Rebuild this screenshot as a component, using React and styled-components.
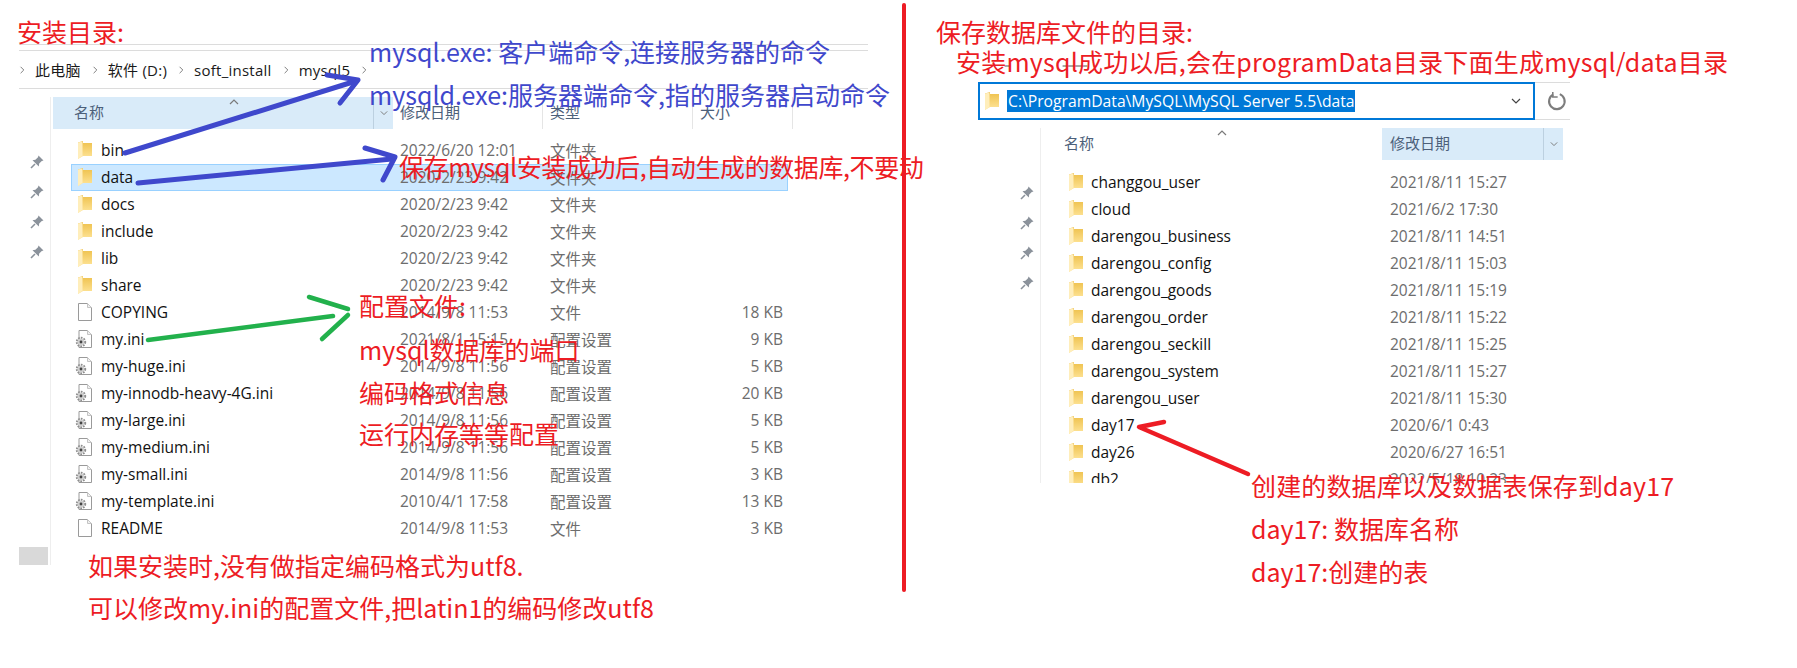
import React from 'react';
import styled, { createGlobalStyle } from 'styled-components';

const GlobalStyle = createGlobalStyle`
html, body {
    margin: 0;
    padding: 0;
    background: #fff;
}
body {
    font-family: "Open Sans", "Noto Sans CJK SC", sans-serif;
}
`

const Page = styled.div`
position: relative;
display: flex;
width: 1797px;
height: 668px;
overflow: hidden;
background: #fff;
`
const LeftPane = styled.section`
width: 902px;
flex: none;
padding: 44px 0 0 19px;
box-sizing: border-box;
`
const Divider = styled.div`
width: 4px;
height: 589px;
flex: none;
margin-top: 3px;
border-radius: 2px;
background: #ed1c24;
position: relative;
z-index: 1;
`
const RightPane = styled.section`
flex: 1;
padding: 82px 0 0 72px;
box-sizing: border-box;
`
const DoubleRule = styled.div`
width: 849px;
height: 5px;
border-top: 1px solid #dcdcdc;
border-bottom: 1px solid #dcdcdc;
`
const Breadcrumb = styled.nav`
display: flex;
align-items: center;
gap: 8px;
width: 849px;
height: 37px;
border-bottom: 1px solid #dcdcdc;
font-size: 15px;
letter-spacing: 0.25px;
color: #1a1a1a;
`
const Crumb = styled.span`
margin-right: 3px;
white-space: nowrap;
`
const AddressRow = styled.div`
display: flex;
width: 592px;
height: 38px;
box-sizing: border-box;
border-top: 1px solid #dcdcdc;
border-bottom: 1px solid #dcdcdc;
`
const AddressBar = styled.div`
display: flex;
align-items: center;
width: 557px;
margin: -1px 0;
padding: 0 12px 0 5px;
box-sizing: border-box;
border: 2px solid #0078d7;
background: #fff;
`
const AddressText = styled.span`
margin-left: 8px;
padding: 0 1px;
flex: none;
width: 348px;
box-sizing: border-box;
background: #0078d7;
color: #fff;
font-size: 15.7px;
line-height: 22px;
white-space: nowrap;
overflow: hidden;
`
const AddressCaret = styled.span`
margin-left: auto;
display: flex;
`
const RefreshSlot = styled.div`
flex: 1;
display: flex;
align-items: center;
justify-content: center;
padding-left: 8px;
`
const Body = styled.div`
display: flex;
height: ${props => props.$height}px;
margin-top: ${props => props.$top}px;
margin-left: ${props => props.$left || 0}px;
overflow: hidden;
`
const PinRail = styled.aside`
position: relative;
flex: none;
display: flex;
flex-direction: column;
align-items: flex-end;
gap: 14px;
width: ${props => props.$width}px;
box-sizing: border-box;
padding: ${props => props.$pad}px 5px 0 0;
border-right: 1px solid #eeeeee;
`
const ScrollThumb = styled.div`
position: absolute;
left: 0;
bottom: 0;
width: 29px;
height: 18px;
background: #d9d9d9;
`
const ListArea = styled.div`
flex: 1;
padding-left: 2px;
min-width: 0;
`
const HeaderRow = styled.div`
position: relative;
display: flex;
height: 32px;
color: #4c607a;
font-size: 15px;
`
const HeaderCell = styled.div`
display: flex;
align-items: center;
flex: none;
width: ${props => props.$width}px;
box-sizing: border-box;
padding: 0 0 3px ${props => props.$pad}px;
background: ${props => (props.$active ? '#d9ebf9' : 'transparent')};
border-right: 1px solid ${props => (props.$active ? '#d9ebf9' : props.$plain ? 'transparent' : '#e5e5e5')};
`
const HeaderDrop = styled.div`
display: flex;
align-items: center;
justify-content: center;
flex: none;
width: ${props => props.$width}px;
background: ${props => (props.$active ? '#d9ebf9' : 'transparent')};
border-left: 1px solid ${props => (props.$active ? '#bcd0e0' : '#e5e5e5')};
`
const SortMark = styled.span`
position: absolute;
top: 0;
left: ${props => props.$left}px;
display: flex;
`
const Rows = styled.ul`
list-style: none;
margin: ${props => props.$top}px 0 0 ${props => props.$left}px;
padding: 0;
`
const Row = styled.li`
display: grid;
grid-template-columns: ${props => props.$cols};
align-items: center;
width: ${props => props.$width}px;
height: 27px;
box-sizing: border-box;
font-size: 15.5px;
white-space: nowrap;
background: ${props => (props.$selected ? '#cce8ff' : 'transparent')};
outline: ${props => (props.$selected ? '1px solid #99d1ff' : 'none')};
outline-offset: -1px;
`
const NameCell = styled.span`
display: flex;
align-items: center;
gap: ${props => props.$gap}px;
padding-left: 7px;
color: #111;
`
const MutedCell = styled.span`
color: #6d6d6d;
`
const SizeCell = styled.span`
color: #6d6d6d;
text-align: right;
padding-right: 5px;
`
const ArrowLayer = styled.svg`
position: absolute;
top: 0;
left: 0;
z-index: 2;
pointer-events: none;
`
const Note = styled.div`
position: absolute;
z-index: 3;
left: ${props => props.$x}px;
top: ${props => props.$y - 17}px;
color: ${props => (props.$blue ? '#3f48cc' : '#ed1c24')};
font-family: "Noto Sans CJK SC", sans-serif;
font-size: 25px;
line-height: 34px;
letter-spacing: ${props => props.$track || 0}px;
white-space: nowrap;
`

const FolderIcon = () => (
    <svg width="14" height="18" viewBox="0 0 14 18" style={{ flex: 'none' }}>
        <defs>
            <linearGradient id="folderFill" x1="0" y1="0" x2="0" y2="1">
                <stop offset="0" stopColor="#eec04a" />
                <stop offset="1" stopColor="#ffe69c" />
            </linearGradient>
        </defs>
        <path d="M0 1.5 L5 0 L5 2 L14 2 L14 15 L5 15 L0 18 Z" fill="url(#folderFill)" />
        <path d="M0 1.5 L4.5 .5 L4.5 15 L0 18 Z" fill="#ffeebb" />
    </svg>
);

const DocIcon = () => (
    <svg width="14" height="18" viewBox="0 0 14 18" style={{ flex: 'none' }}>
        <path d="M.5 .5 H9.5 L13.5 4.5 V17.5 H.5 Z" fill="#fff" stroke="#9a9a9a" />
        <path d="M9.5 .5 V4.5 H13.5" fill="#f0f0f0" stroke="#c4c4c4" />
    </svg>
);

const IniIcon = () => (
    <svg width="18" height="20" viewBox="0 0 18 20" style={{ flex: 'none', marginLeft: '-3px', marginRight: '-1px' }}>
        <path d="M4 1.5 H12.5 L16.5 5.5 V18.5 H4 Z" fill="#fff" stroke="#9a9a9a" />
        <path d="M12.5 1.5 V5.5 H16.5" fill="#f0f0f0" stroke="#c4c4c4" />
        <circle cx="6" cy="13" r="4" fill="none" stroke="#8e8e8e" strokeWidth="2.4" strokeDasharray="1.6 1" />
        <circle cx="6" cy="13" r="3.4" fill="#cfcfcf" />
        <circle cx="6" cy="13" r="1.4" fill="#444" />
    </svg>
);

const PinIcon = () => (
    <svg width="16" height="16" viewBox="0 0 16 16">
        <path d="M9.5 1.5 L14.5 6.5 L12.8 7 L10.2 9.6 L9.8 12.5 L3.5 6.2 L6.4 5.8 L9 3.2 Z" fill="#8b929b" />
        <path d="M6 10 L2 14" stroke="#8b929b" strokeWidth="1.6" />
    </svg>
);

const Chevron = ({ dir = 'right', size = 8, color = '#7a7a7a' }) => {
    const paths = {
        right: 'M2 1 L6 5 L2 9',
        down: 'M1 3 L5 7 L9 3',
        up: 'M1 7 L5 3 L9 7',
    };
    return (
        <svg width={size} height={size} viewBox="0 0 10 10" fill="none" stroke={color} strokeWidth="1.2">
            <path d={paths[dir]} />
        </svg>
    );
};

const RefreshIcon = () => (
    <svg width="20" height="20" viewBox="0 0 18 18" fill="none" stroke="#7d7d7d" strokeWidth="1.9">
        <path d="M11.5 2.8 A7 7 0 1 1 5.6 3.1" />
        <path d="M5.2 .8 V5.4 H9.6" strokeWidth="1.4" />
    </svg>
);

const leftFiles = [
    { name: 'bin', icon: 'folder', date: '2022/6/20 12:01', type: '文件夹' },
    { name: 'data', icon: 'folder', date: '2020/2/23 9:42', type: '文件夹', selected: true },
    { name: 'docs', icon: 'folder', date: '2020/2/23 9:42', type: '文件夹' },
    { name: 'include', icon: 'folder', date: '2020/2/23 9:42', type: '文件夹' },
    { name: 'lib', icon: 'folder', date: '2020/2/23 9:42', type: '文件夹' },
    { name: 'share', icon: 'folder', date: '2020/2/23 9:42', type: '文件夹' },
    { name: 'COPYING', icon: 'doc', date: '2014/9/8 11:53', type: '文件', size: '18 KB' },
    { name: 'my.ini', icon: 'ini', date: '2021/8/1 15:15', type: '配置设置', size: '9 KB' },
    { name: 'my-huge.ini', icon: 'ini', date: '2014/9/8 11:56', type: '配置设置', size: '5 KB' },
    { name: 'my-innodb-heavy-4G.ini', icon: 'ini', date: '2014/9/8 11:56', type: '配置设置', size: '20 KB' },
    { name: 'my-large.ini', icon: 'ini', date: '2014/9/8 11:56', type: '配置设置', size: '5 KB' },
    { name: 'my-medium.ini', icon: 'ini', date: '2014/9/8 11:56', type: '配置设置', size: '5 KB' },
    { name: 'my-small.ini', icon: 'ini', date: '2014/9/8 11:56', type: '配置设置', size: '3 KB' },
    { name: 'my-template.ini', icon: 'ini', date: '2010/4/1 17:58', type: '配置设置', size: '13 KB' },
    { name: 'README', icon: 'doc', date: '2014/9/8 11:53', type: '文件', size: '3 KB' },
];

const rightFiles = [
    ['changgou_user', '2021/8/11 15:27'],
    ['cloud', '2021/6/2 17:30'],
    ['darengou_business', '2021/8/11 14:51'],
    ['darengou_config', '2021/8/11 15:03'],
    ['darengou_goods', '2021/8/11 15:19'],
    ['darengou_order', '2021/8/11 15:22'],
    ['darengou_seckill', '2021/8/11 15:25'],
    ['darengou_system', '2021/8/11 15:27'],
    ['darengou_user', '2021/8/11 15:30'],
    ['day17', '2020/6/1 0:43'],
    ['day26', '2020/6/27 16:51'],
    ['db2', '2022/5/18 10:23'],
];

const crumbs = ['此电脑', '软件 (D:)', 'soft_install', 'mysql5'];
const icons = { folder: <FolderIcon />, doc: <DocIcon />, ini: <IniIcon /> };

const notes = [
    { x: 17, y: 31, text: '安装目录:' },
    { x: 369, y: 51, blue: true, text: 'mysql.exe: 客户端命令,连接服务器的命令' },
    { x: 369, y: 94, blue: true, text: 'mysqld.exe:服务器端命令,指的服务器启动命令' },
    { x: 399, y: 166, track: -0.4, text: '保存mysql安装成功后,自动生成的数据库,不要动' },
    { x: 359, y: 305, text: '配置文件:' },
    { x: 359, y: 349, text: 'mysql数据库的端口' },
    { x: 359, y: 392, text: '编码格式信息' },
    { x: 359, y: 433, text: '运行内存等等配置' },
    { x: 88, y: 565, text: '如果安装时,没有做指定编码格式为utf8.' },
    { x: 88, y: 607, text: '可以修改my.ini的配置文件,把latin1的编码修改utf8' },
    { x: 936, y: 31, text: '保存数据库文件的目录:' },
    { x: 956, y: 61, track: 0.21, text: '安装mysql成功以后,会在programData目录下面生成mysql/data目录' },
    { x: 1251, y: 485, track: 0.15, text: '创建的数据库以及数据表保存到day17' },
    { x: 1251, y: 528, text: 'day17: 数据库名称' },
    { x: 1251, y: 571, text: 'day17:创建的表' },
];

const Arrows = () => (
    <ArrowLayer width="1797" height="668" fill="none" strokeLinecap="round" strokeLinejoin="round">
        <path d="M1005 66 H1010 M1063 66 H1087" stroke="#555" strokeWidth="1" />
        <g stroke="#3f48cc" strokeWidth="5">
            <path d="M125 153 L356 81" />
            <path d="M327 75 L358 80 L340 103" />
            <path d="M138 183 L392 159" />
            <path d="M365 148 L395 157 L383 180" />
        </g>
        <g stroke="#22b14c" strokeWidth="4.5">
            <path d="M148 340 L333 316" />
            <path d="M309 297 L348 309" />
            <path d="M348 315 L322 339" />
        </g>
        <path d="M1248 474 L1139 427 L1164 422" stroke="#ed1c24" strokeWidth="4.5" />
    </ArrowLayer>
);

const App = () => {
    return (
        <>
            <GlobalStyle />
            <Page>
                <LeftPane>
                    <DoubleRule />
                    <Breadcrumb>
                        <Chevron />
                        {crumbs.map(crumb => (
                            <React.Fragment key={crumb}>
                                <Crumb>{crumb}</Crumb>
                                <Chevron />
                            </React.Fragment>
                        ))}
                    </Breadcrumb>
                    <Body $height={468} $top={8}>
                        <PinRail $width={32} $pad={57}>
                            <PinIcon />
                            <PinIcon />
                            <PinIcon />
                            <PinIcon />
                            <ScrollThumb />
                        </PinRail>
                        <ListArea>
                            <HeaderRow>
                                <HeaderCell $active $width={320} $pad={21}>名称</HeaderCell>
                                <HeaderDrop $active $width={19}><Chevron dir="down" /></HeaderDrop>
                                <HeaderCell $width={150} $pad={7}>修改日期</HeaderCell>
                                <HeaderCell $width={150} $pad={7}>类型</HeaderCell>
                                <HeaderCell $width={100} $pad={7}>大小</HeaderCell>
                                <SortMark $left={176}><Chevron dir="up" size={10} /></SortMark>
                            </HeaderRow>
                            <Rows $top={7.5} $left={18}>
                                {leftFiles.map(file => (
                                    <Row key={file.name} $cols="329px 150px 150px 88px" $width={717} $selected={file.selected}>
                                        <NameCell $gap={9}>{icons[file.icon]}{file.name}</NameCell>
                                        <MutedCell>{file.date}</MutedCell>
                                        <MutedCell>{file.type}</MutedCell>
                                        <SizeCell>{file.size}</SizeCell>
                                    </Row>
                                ))}
                            </Rows>
                        </ListArea>
                    </Body>
                </LeftPane>
                <Divider />
                <RightPane>
                    <AddressRow>
                        <AddressBar>
                            <FolderIcon />
                            <AddressText>C:\ProgramData\MySQL\MySQL Server 5.5\data</AddressText>
                            <AddressCaret><Chevron dir="down" size={10} color="#444" /></AddressCaret>
                        </AddressBar>
                        <RefreshSlot><RefreshIcon /></RefreshSlot>
                    </AddressRow>
                    <Body $height={355} $top={8} $left={32}>
                        <PinRail $width={31} $pad={57}>
                            <PinIcon />
                            <PinIcon />
                            <PinIcon />
                            <PinIcon />
                        </PinRail>
                        <ListArea>
                            <HeaderRow>
                                <HeaderCell $plain $width={339} $pad={21}>名称</HeaderCell>
                                <HeaderCell $active $width={161} $pad={8}>修改日期</HeaderCell>
                                <HeaderDrop $active $width={19}><Chevron dir="down" /></HeaderDrop>
                                <SortMark $left={174}><Chevron dir="up" size={10} /></SortMark>
                            </HeaderRow>
                            <Rows $top={8.5} $left={19}>
                                {rightFiles.map(([name, date]) => (
                                    <Row key={name} $cols="328px 170px" $width={498}>
                                        <NameCell $gap={8}><FolderIcon />{name}</NameCell>
                                        <MutedCell>{date}</MutedCell>
                                    </Row>
                                ))}
                            </Rows>
                        </ListArea>
                    </Body>
                </RightPane>
                <Arrows />
                {notes.map(note => (
                    <Note key={note.text} $x={note.x} $y={note.y} $blue={note.blue} $track={note.track}>{note.text}</Note>
                ))}
            </Page>
        </>
    );
};

export default App;
